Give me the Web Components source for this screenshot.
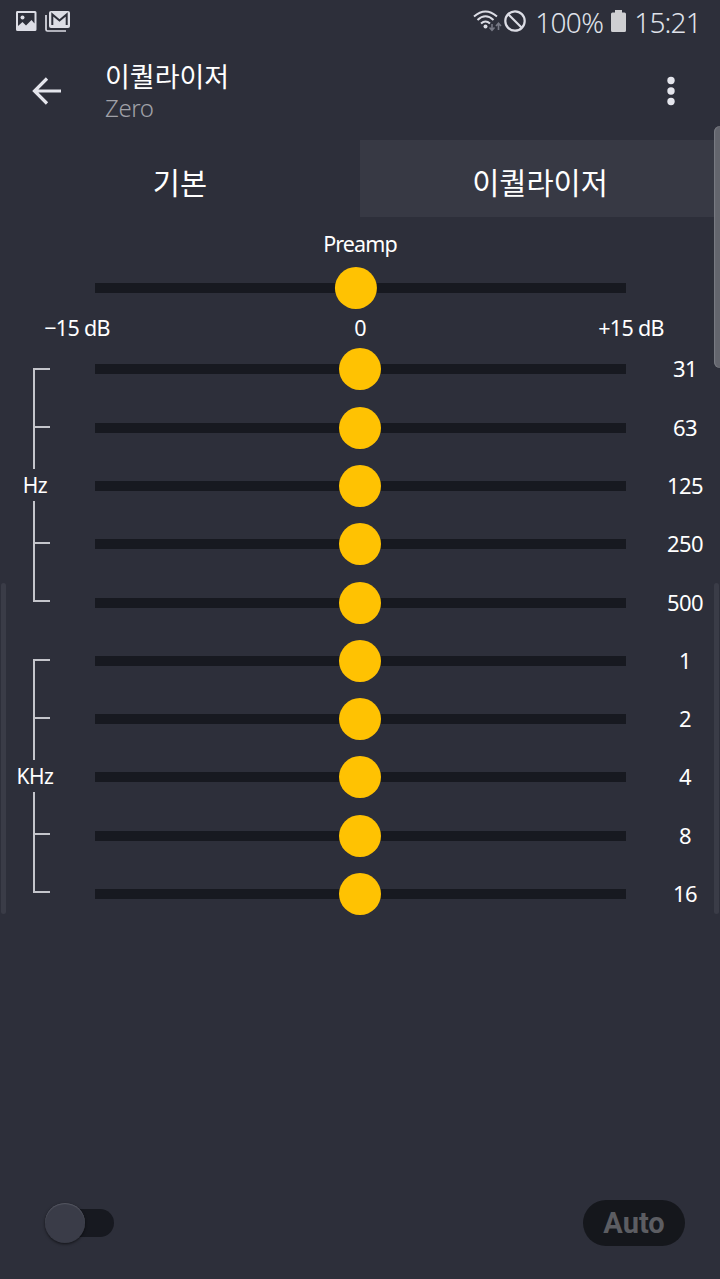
<!DOCTYPE html>
<html lang="ko">
<head>
<meta charset="utf-8">
<title>이퀄라이저</title>
<style>
  html, body{
    height: 100%;
    margin: 0;
  }

  body{
    background-color: #2d2f3a;
    color: #fff;
    font-family: 'Noto Sans', 'Noto Sans CJK KR', sans-serif;
    overflow: hidden;
  }
</style>
</head>
<body>
<equalizer-screen></equalizer-screen>

<script>
class StatusBar extends HTMLElement {
  constructor () {
    super()
    this.shadow = this.attachShadow({ mode: 'open' })
  }

  connectedCallback () {
    this.render()
  }

  render () {
    this.shadow.innerHTML =
    `
    <style>
      :host{
        align-items: center;
        box-sizing: border-box;
        color: #dfe1e9;
        display: flex;
        font-size: 28px;
        font-weight: 300;
        height: 44px;
        justify-content: space-between;
        line-height: 44px;
        padding: 0 19px 0 15px;
      }

      svg{
        display: block;
      }

      .group{
        align-items: center;
        display: flex;
      }

      .notifications{
        gap: 8px;
        margin-bottom: 2px;
      }

      .percent{
        letter-spacing: -0.7px;
        margin: 0 8px 0 9px;
      }

      .clock{
        letter-spacing: -0.8px;
        margin: 0 0 0 8px;
      }

      .block{
        margin: 0 0 2px 2px;
      }

      .wifi,
      .battery{
        margin-bottom: 2px;
      }
    </style>

    <div class="group notifications">
      <svg width="22" height="20" viewBox="0 0 22 20">
        <path fill="#dcdde5" fill-rule="evenodd" d="M2 0H20Q21.500 0 21.500 1.500V18.500Q21.500 20 20 20H2.500Q1 20 1 18.500V1.500Q1 0 2 0ZM3 2V15L7.500 11L11 14.500L16.500 9L19.500 12.500V2Z"/>
        <circle cx="7.500" cy="6.500" r="2" fill="#dcdde5"/>
      </svg>
      <svg width="25" height="21" viewBox="0 0 25 21">
        <path d="M1 4V18.500Q1 20 2.500 20H21" fill="none" stroke="#dcdde5" stroke-width="1.700"/>
        <rect x="4" y="0" width="21" height="17" rx="2" fill="#dcdde5"/>
        <path d="M7.300 14V3.500L14.500 9.500L21.700 3.500V14" fill="none" stroke="#2d2f3a" stroke-width="2"/>
      </svg>
    </div>
    <div class="group">
      <svg class="wifi" width="29" height="22" viewBox="0 0 29 22">
        <g fill="none" stroke="#dcdde5" stroke-width="2">
          <path d="M1 6.500Q12.500 -3.500 24 6.500"/>
          <path d="M4.500 10Q12.500 2.500 20.500 10"/>
          <path d="M8 13.500Q12.500 9.500 17 13.500"/>
        </g>
        <circle cx="12.500" cy="16.500" r="2" fill="#dcdde5"/>
        <path d="M19 14V20M16.500 17.500L19 20.200L21.500 17.500M25.500 20V13.500M23 16L25.500 13.300L28 16" fill="none" stroke="#777985" stroke-width="1.600"/>
      </svg>
      <svg class="block" width="22" height="22" viewBox="0 0 22 22">
        <g fill="none" stroke="#dcdde5" stroke-width="2.200">
          <circle cx="11" cy="11" r="9.700"/>
          <path d="M4 4L18 18"/>
        </g>
      </svg>
      <span class="percent">100%</span>
      <svg class="battery" width="15" height="22" viewBox="0 0 15 22">
        <path fill="#cfcfd2" d="M4 0H11V2.500H13.500Q15 2.500 15 4V20.500Q15 22 13.500 22H1.500Q0 22 0 20.500V4Q0 2.500 1.500 2.500H4Z"/>
      </svg>
      <span class="clock">15:21</span>
    </div>
    `
  }
}

class AppHeader extends HTMLElement {
  constructor () {
    super()
    this.shadow = this.attachShadow({ mode: 'open' })
  }

  connectedCallback () {
    this.render()
  }

  render () {
    this.shadow.innerHTML =
    `
    <style>
      :host{
        align-items: center;
        box-sizing: border-box;
        display: flex;
        height: 96px;
        padding: 0 45px 2px 32px;
      }

      svg{
        display: block;
      }

      ::slotted(span){
        display: block;
      }

      .titles{
        flex: 1;
        margin: 0 0 0 43px;
      }

      .title{
        font-family: 'Noto Sans CJK KR', sans-serif;
        font-size: 27px;
        line-height: 34px;
      }

      .subtitle{
        color: #a0a1a8;
        font-size: 24px;
        font-weight: 300;
        letter-spacing: -0.4px;
        line-height: 30px;
      }
    </style>

    <svg width="30" height="28" viewBox="0 0 30 28">
      <path d="M15 1.500L2.500 14L15 26.500M2.500 14H29" fill="none" stroke="#e4e5ec" stroke-width="3.200"/>
    </svg>
    <div class="titles">
      <div class="title"><slot name="title"></slot></div>
      <div class="subtitle"><slot name="subtitle"></slot></div>
    </div>
    <svg width="8" height="30" viewBox="0 0 8 30">
      <g fill="#e4e5ec">
        <circle cx="4" cy="4.500" r="3.700"/>
        <circle cx="4" cy="15" r="3.700"/>
        <circle cx="4" cy="25.500" r="3.700"/>
      </g>
    </svg>
    `
  }
}

class TabItem extends HTMLElement {
  constructor () {
    super()
    this.shadow = this.attachShadow({ mode: 'open' })
  }

  connectedCallback () {
    this.render()
  }

  render () {
    this.shadow.innerHTML =
    `
    <style>
      :host{
        align-items: center;
        box-sizing: border-box;
        display: flex;
        font-family: 'Noto Sans CJK KR', sans-serif;
        font-size: 29.5px;
        height: 77px;
        justify-content: center;
        padding-top: 5px;
      }

      :host([selected]){
        background-color: #373944;
      }
    </style>

    <slot></slot>
    `
  }
}

class LevelSlider extends HTMLElement {
  constructor () {
    super()
    this.shadow = this.attachShadow({ mode: 'open' })
  }

  connectedCallback () {
    this.render()
  }

  render () {
    const value = Number(this.getAttribute('value') || 0)
    const offset = value / 15 * 244.5

    this.shadow.innerHTML =
    `
    <style>
      :host{
        display: grid;
        height: 42px;
        place-items: center;
        width: 531px;
      }

      .track,
      .thumb{
        grid-area: 1 / 1;
      }

      .track{
        background-color: #171920;
        height: 10px;
        width: 100%;
      }

      .thumb{
        background-color: #ffc202;
        border-radius: 50%;
        height: 42px;
        transform: translateX(${offset}px);
        width: 42px;
      }
    </style>

    <div class="track"></div>
    <div class="thumb"></div>
    `
  }
}

class PreampControl extends HTMLElement {
  constructor () {
    super()
    this.shadow = this.attachShadow({ mode: 'open' })
  }

  connectedCallback () {
    this.render()
  }

  render () {
    this.shadow.innerHTML =
    `
    <style>
      :host{
        align-items: center;
        box-sizing: border-box;
        display: flex;
        flex-direction: column;
        font-size: 21.500px;
        height: 123.200px;
        line-height: 30px;
        padding-top: 12px;
      }

      level-slider{
        margin-top: 7.500px;
      }

      .label{
        letter-spacing: -0.9px;
      }

      .scale{
        display: grid;
        grid-template-columns: 132px 1fr 132px;
        letter-spacing: -0.7px;
        margin-top: 4px;
        text-align: center;
        width: 686px;
      }

      .scale span:first-child{
        margin-left: -12px;
      }

      .scale span:last-child{
        margin-right: 12px;
      }
    </style>

    <div class="label"><slot></slot></div>
    <level-slider value="-0.250"></level-slider>
    <div class="scale"><span>−15 dB</span><span>0</span><span>+15 dB</span></div>
    `
  }
}

class BandGroup extends HTMLElement {
  constructor () {
    super()
    this.shadow = this.attachShadow({ mode: 'open' })
  }

  connectedCallback () {
    this.render()
  }

  render () {
    const bands = this.getAttribute('bands').split(',')

    this.shadow.innerHTML =
    `
    <style>
      :host{
        display: grid;
        font-size: 22px;
        grid-template-columns: 94.500px 1fr;
        height: 291.500px;
      }

      .unit{
        align-items: center;
        display: flex;
        flex-direction: column;
        justify-content: center;
        letter-spacing: -0.5px;
        padding-bottom: 1px;
        width: 70px;
      }

      .unit svg{
        display: block;
        margin-left: 12px;
      }

      .unit span{
        font-size: 21px;
        line-height: 31px;
      }

      .unit path{
        fill: none;
        stroke: #c4c5cb;
        stroke-width: 2;
      }

      .band{
        align-items: center;
        display: grid;
        grid-template-columns: 531px 1fr;
        height: 58.300px;
      }

      .value{
        letter-spacing: -0.6px;
        padding: 0 0 2px 24px;
        text-align: center;
        width: 71px;
      }
    </style>

    <div class="unit">
      <svg width="18" height="102" viewBox="0 0 18 102">
        <path d="M18 1H2V101M2 59H18"/>
      </svg>
      <span><slot></slot></span>
      <svg width="18" height="102" viewBox="0 0 18 102">
        <path d="M2 0V100H18M2 42H18"/>
      </svg>
    </div>
    <div>
      ${bands.map(band => `<div class="band"><level-slider></level-slider><span class="value">${band}</span></div>`).join('')}
    </div>
    `
  }
}

class ToggleSwitch extends HTMLElement {
  constructor () {
    super()
    this.shadow = this.attachShadow({ mode: 'open' })
  }

  connectedCallback () {
    this.render()
  }

  render () {
    this.shadow.innerHTML =
    `
    <style>
      :host{
        align-items: center;
        display: flex;
        height: 42px;
        width: 69px;
      }

      .track{
        align-items: center;
        background-color: #171920;
        border-radius: 14px;
        display: flex;
        height: 28px;
        margin-left: 7px;
        width: 62px;
      }

      .thumb{
        background-color: #3a3c48;
        border-radius: 50%;
        box-shadow: 0 1px 3px rgba(0, 0, 0, 0.6), inset 0 1px 1px #555762;
        flex: none;
        height: 40px;
        margin-left: -7px;
        width: 40px;
      }
    </style>

    <div class="track"><div class="thumb"></div></div>
    `
  }
}

class PillButton extends HTMLElement {
  constructor () {
    super()
    this.shadow = this.attachShadow({ mode: 'open' })
  }

  connectedCallback () {
    this.render()
  }

  render () {
    this.shadow.innerHTML =
    `
    <style>
      button{
        all: unset;
        background-color: #15171c;
        border-radius: 23px;
        color: #5c5d62;
        display: block;
        font-family: Roboto, sans-serif;
        font-size: 29px;
        font-weight: 700;
        height: 46px;
        line-height: 47px;
        text-align: center;
        width: 102px;
      }
    </style>

    <button><slot></slot></button>
    `
  }
}

class EqualizerScreen extends HTMLElement {
  constructor () {
    super()
    this.shadow = this.attachShadow({ mode: 'open' })
  }

  connectedCallback () {
    this.render()
  }

  render () {
    this.shadow.innerHTML =
    `
    <style>
      :host{
        display: flex;
        flex-direction: column;
        height: 1279px;
        overflow: hidden;
        position: relative;
        width: 720px;
      }

      .tabs{
        display: grid;
        grid-template-columns: 1fr 1fr;
      }

      footer{
        align-items: center;
        display: flex;
        justify-content: space-between;
        margin-top: auto;
        padding: 0 35px 33px 45px;
      }

      /* edge handles float above the content */
      .edge{
        background-color: #3a3c47;
        border-radius: 3px;
        height: 331px;
        position: absolute;
        top: 583px;
        width: 5px;
      }

      .edge.left{
        left: 1px;
      }

      .edge.right{
        right: 1px;
      }

      .panel-handle{
        background-color: #63656d;
        border-radius: 6px 0 0 6px;
        box-shadow: inset 1px 0 1px #7b7d84;
        height: 242px;
        position: absolute;
        right: 0;
        top: 126px;
        width: 6px;
      }
    </style>

    <status-bar></status-bar>
    <app-header>
      <span slot="title">이퀄라이저</span>
      <span slot="subtitle">Zero</span>
    </app-header>
    <div class="tabs">
      <tab-item>기본</tab-item>
      <tab-item selected>이퀄라이저</tab-item>
    </div>
    <preamp-control>Preamp</preamp-control>
    <band-group bands="31,63,125,250,500">Hz</band-group>
    <band-group bands="1,2,4,8,16">KHz</band-group>
    <footer>
      <toggle-switch></toggle-switch>
      <pill-button>Auto</pill-button>
    </footer>
    <div class="edge left"></div>
    <div class="edge right"></div>
    <div class="panel-handle"></div>
    `
  }
}

customElements.define('status-bar', StatusBar)
customElements.define('app-header', AppHeader)
customElements.define('tab-item', TabItem)
customElements.define('level-slider', LevelSlider)
customElements.define('preamp-control', PreampControl)
customElements.define('band-group', BandGroup)
customElements.define('toggle-switch', ToggleSwitch)
customElements.define('pill-button', PillButton)
customElements.define('equalizer-screen', EqualizerScreen)
</script>
</body>
</html>
